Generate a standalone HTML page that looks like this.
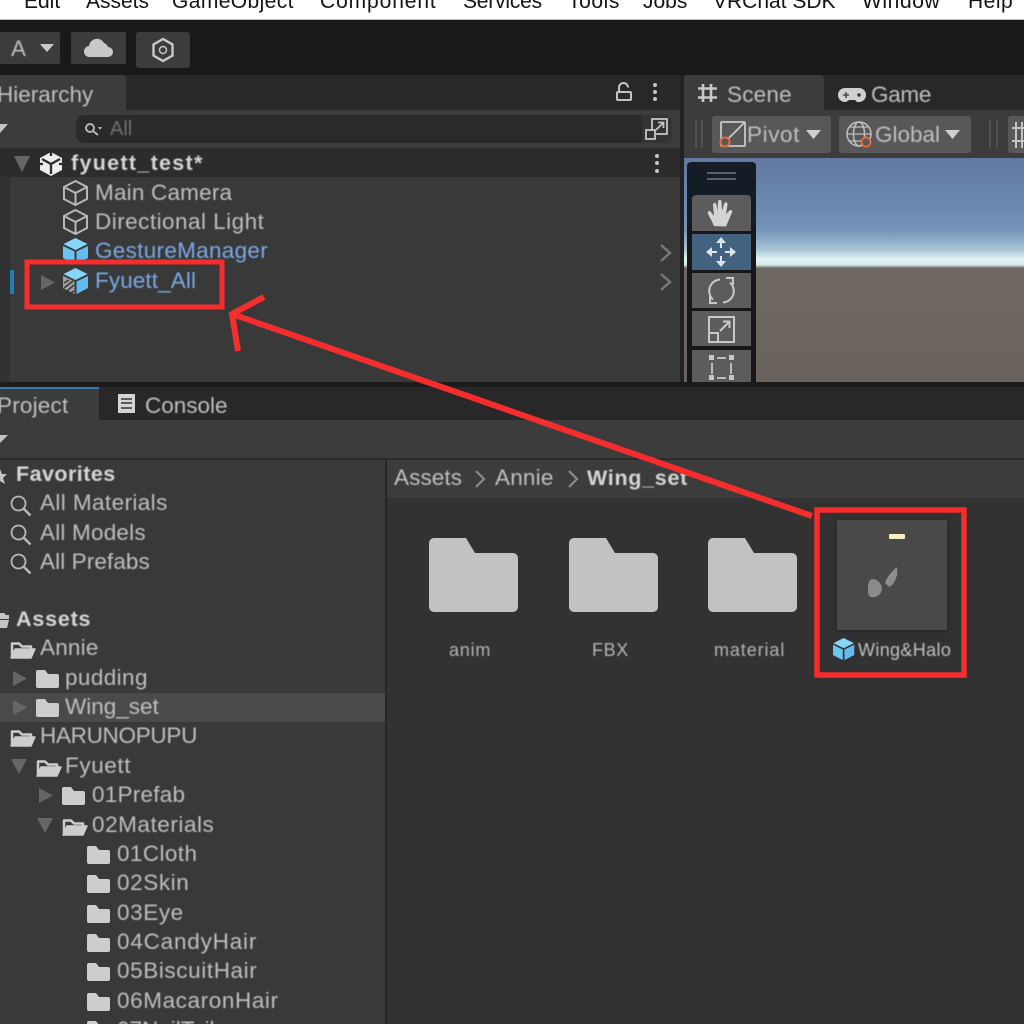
<!DOCTYPE html>
<html><head><meta charset="utf-8">
<style>
html,body{margin:0;padding:0;background:#2f2f2f}
#p{position:relative;width:1024px;height:1024px;overflow:hidden;background:#393939;font-family:"Liberation Sans",sans-serif}
.b{position:absolute}
.t{position:absolute;white-space:nowrap;font-size:22.5px;line-height:28px;color:#bfbfbf;filter:blur(.5px)}
.h{color:#d6d6d6;font-weight:bold;font-size:21.5px}
.l{color:#7aa9e6}
.m{color:#141414;font-size:21px;line-height:24px;top:-10px;filter:blur(.3px)}
.s{font-size:18px;line-height:20px;top:640px;color:#b4b4b4}
svg{position:absolute;left:0;top:0}
</style></head><body><div id="p">
<!-- menu -->
<div class="b" style="left:0;top:0;width:1024px;height:20px;background:#fff"></div>
<div class="b" style="left:0;top:19px;width:1024px;height:1px;background:#bbb"></div>
<div class="t m" style="left:24px">Edit</div>
<div class="t m" style="left:86px">Assets</div>
<div class="t m" style="left:172px;letter-spacing:.4px">GameObject</div>
<div class="t m" style="left:320px;letter-spacing:.9px">Component</div>
<div class="t m" style="left:463px;letter-spacing:-.2px">Services</div>
<div class="t m" style="left:568px;letter-spacing:.6px">Tools</div>
<div class="t m" style="left:643px">Jobs</div>
<div class="t m" style="left:713px">VRChat SDK</div>
<div class="t m" style="left:862px;letter-spacing:.6px">Window</div>
<div class="t m" style="left:968px;letter-spacing:.5px">Help</div>
<!-- toolbar -->
<div class="b" style="left:0;top:20px;width:1024px;height:55px;background:#191919"></div>
<div class="b" style="left:0;top:32px;width:60px;height:32px;background:#3c3c3c;border-radius:2px"></div>
<div class="t" style="left:11px;top:35px">A</div>
<div class="b" style="left:71px;top:32px;width:55px;height:32px;background:#3c3c3c;border-radius:2px"></div>
<div class="b" style="left:136px;top:32px;width:54px;height:36px;background:#3c3c3c;border-radius:3px"></div>
<!-- hierarchy panel -->
<div class="b" style="left:0;top:75px;width:680px;height:35px;background:#282828"></div>
<div class="b" style="left:0;top:75px;width:126px;height:36px;background:#3c3c3c;border-radius:0 4px 0 0"></div>
<div class="t" style="left:-3px;top:81px">Hierarchy</div>
<div class="b" style="left:0;top:111px;width:680px;height:37px;background:#3c3c3c"></div>
<div class="b" style="left:76px;top:115px;width:566px;height:28px;background:#2a2a2a;border-radius:8px 0 0 8px"></div>
<div class="b" style="left:642px;top:115px;width:30px;height:28px;background:#333;border-radius:0 8px 8px 0"></div>
<div class="t" style="left:110px;top:115px;color:#707070;font-size:20px">All</div>
<div class="b" style="left:0;top:148px;width:680px;height:29px;background:#2c2c2c"></div>
<div class="t h" style="left:71px;top:149px;letter-spacing:1.3px">fyuett_test*</div>
<div class="b" style="left:0;top:177px;width:10px;height:205px;background:#313131"></div>
<div class="t" style="left:95px;top:179px;letter-spacing:.2px">Main Camera</div>
<div class="t" style="left:95px;top:208px;letter-spacing:.47px">Directional Light</div>
<div class="t l" style="left:95px;top:237px;letter-spacing:.3px">GestureManager</div>
<div class="t l" style="left:95px;top:267px;letter-spacing:.1px">Fyuett_All</div>
<div class="b" style="left:10px;top:270px;width:4px;height:24px;background:#1c7fb8"></div>
<!-- scene panel -->
<div class="b" style="left:680px;top:75px;width:4px;height:307px;background:#222"></div>
<div class="b" style="left:684px;top:75px;width:340px;height:35px;background:#282828"></div>
<div class="b" style="left:684px;top:75px;width:140px;height:36px;background:#3c3c3c;border-radius:4px 4px 0 0"></div>
<div class="t" style="left:727px;top:81px;letter-spacing:.2px">Scene</div>
<div class="t" style="left:871px;top:81px;letter-spacing:-.3px">Game</div>
<div class="b" style="left:684px;top:110px;width:340px;height:48px;background:#3c3c3c"></div>
<div class="b" style="left:712px;top:116px;width:119px;height:37px;background:#585858;border-radius:3px"></div>
<div class="b" style="left:839px;top:116px;width:132px;height:37px;background:#585858;border-radius:3px"></div>
<div class="b" style="left:1008px;top:116px;width:16px;height:37px;background:#585858;border-radius:3px 0 0 3px"></div>
<div class="t" style="left:747px;top:121px;letter-spacing:.6px">Pivot</div>
<div class="t" style="left:875px;top:121px">Global</div>
<div class="b" style="left:684px;top:158px;width:340px;height:224px;background:linear-gradient(#62789f 0,#6a86ae 40px,#7493b8 72px,#a9c6d6 92px,#e2f4f4 101px,#d4e8e8 107px,#6f6862 110px,#6a625c 224px)"></div>
<div class="b" style="left:687px;top:162px;width:69px;height:220px;background:#141c26;border-radius:4px 4px 0 0"></div>
<div class="b" style="left:687px;top:225px;width:69px;height:157px;background:#171717"></div>
<div class="b" style="left:692px;top:195px;width:59px;height:36px;background:#5c5c5c;border-radius:4px 4px 0 0"></div>
<div class="b" style="left:692px;top:234px;width:59px;height:36px;background:#42627f"></div>
<div class="b" style="left:692px;top:273px;width:59px;height:35px;background:#5c5c5c"></div>
<div class="b" style="left:692px;top:311px;width:59px;height:35px;background:#5c5c5c"></div>
<div class="b" style="left:692px;top:350px;width:59px;height:32px;background:#5c5c5c"></div>
<!-- divider -->
<div class="b" style="left:0;top:382px;width:1024px;height:5px;background:#1c1c1c"></div>
<!-- project panel -->
<div class="b" style="left:0;top:387px;width:1024px;height:33px;background:#282828"></div>
<div class="b" style="left:0;top:387px;width:99px;height:34px;background:#3c3c3c;border-top:2px solid #3a76aa;box-sizing:border-box"></div>
<div class="t" style="left:-3px;top:392px;letter-spacing:.2px">Project</div>
<div class="t" style="left:145px;top:392px">Console</div>
<div class="b" style="left:0;top:420px;width:1024px;height:38px;background:#3c3c3c"></div>
<div class="b" style="left:0;top:458px;width:1024px;height:2px;background:#2a2a2a"></div>
<div class="b" style="left:0;top:460px;width:385px;height:564px;background:#393939"></div>
<div class="b" style="left:385px;top:460px;width:2px;height:564px;background:#262626"></div>
<div class="b" style="left:387px;top:460px;width:637px;height:38px;background:#3c3c3c"></div>
<div class="b" style="left:387px;top:498px;width:637px;height:526px;background:#323232"></div>
<div class="b" style="left:0;top:693px;width:385px;height:29px;background:#4a4a4a"></div>
<div class="t h" style="left:16px;top:460px;letter-spacing:.45px">Favorites</div>
<div class="t" style="left:40px;top:489px;letter-spacing:.4px">All Materials</div>
<div class="t" style="left:40px;top:519px;letter-spacing:.2px">All Models</div>
<div class="t" style="left:40px;top:548px;letter-spacing:.1px">All Prefabs</div>
<div class="t h" style="left:16px;top:605px;letter-spacing:.8px">Assets</div>
<div class="t" style="left:40px;top:634px;letter-spacing:.2px">Annie</div>
<div class="t" style="left:65px;top:664px;letter-spacing:.4px">pudding</div>
<div class="t" style="left:65px;top:693px">Wing_set</div>
<div class="t" style="left:40px;top:722px;letter-spacing:-.3px">HARUNOPUPU</div>
<div class="t" style="left:65px;top:752px;letter-spacing:.6px">Fyuett</div>
<div class="t" style="left:92px;top:781px;letter-spacing:.25px">01Prefab</div>
<div class="t" style="left:92px;top:811px;letter-spacing:.55px">02Materials</div>
<div class="t" style="left:117px;top:840px;letter-spacing:.4px">01Cloth</div>
<div class="t" style="left:117px;top:869px;letter-spacing:.6px">02Skin</div>
<div class="t" style="left:117px;top:899px;letter-spacing:.6px">03Eye</div>
<div class="t" style="left:117px;top:928px;letter-spacing:.8px">04CandyHair</div>
<div class="t" style="left:117px;top:957px;letter-spacing:.6px">05BiscuitHair</div>
<div class="t" style="left:117px;top:987px;letter-spacing:.6px">06MacaronHair</div>
<div class="t" style="left:117px;top:1016px">07NailTail</div>
<div class="t" style="left:394px;top:464px;letter-spacing:.1px">Assets</div>
<div class="t" style="left:495px;top:464px;letter-spacing:.2px">Annie</div>
<div class="t h" style="left:587px;top:464px;letter-spacing:.7px">Wing_set</div>
<div class="t s" style="left:449px;letter-spacing:.8px">anim</div>
<div class="t s" style="left:592px;letter-spacing:.6px">FBX</div>
<div class="t s" style="left:714px;letter-spacing:.9px">material</div>
<div class="t s" style="left:858px;letter-spacing:.35px;color:#c0c0c0">Wing&amp;Halo</div>
<div class="b" style="left:837px;top:520px;width:110px;height:110px;background:#494949;box-shadow:0 1px 4px #222"></div>

<svg width="1024" height="1024" viewBox="0 0 1024 1024" fill="none">
<defs>
<g id="fc"><path d="M0 2a2 2 0 0 1 2-2h7l3 4h9a2 2 0 0 1 2 2v10a2 2 0 0 1-2 2H2a2 2 0 0 1-2-2z" fill="#cdcdcd"/></g>
<g id="fo"><path d="M2 16V2.500h7l3 3h9V8" stroke="#cdcdcd" stroke-width="2.500" stroke-linejoin="round"/><path d="M1 17l4-9h20l-4 9z" fill="#cdcdcd" stroke="#cdcdcd" stroke-width="1.500" stroke-linejoin="round"/></g>
<g id="bf"><path d="M0 5a5 5 0 0 1 5-5h32l9 15h38a5 5 0 0 1 5 5v49a5 5 0 0 1-5 5H5a5 5 0 0 1-5-5z" fill="#c2c2c2"/></g>
<g id="cube"><path d="M12.500 1l11.500 6v12l-11.500 6L1 19V7z M1 7l11.500 6L24 7 M12.500 13v12" stroke="#b8b8b8" stroke-width="2"/></g>
<g id="bcube"><path d="M12.500 0l12 6-12 6-12-6z" fill="#86d6fc"/><path d="M0 8l11.500 5.500V26L0 20z" fill="#6cc4f0"/><path d="M25 8l-11.500 5.500V26L25 20z" fill="#62bdee"/></g>
<g id="mag"><circle cx="8.500" cy="8.500" r="7" stroke="#b8b8b8" stroke-width="1.800"/><path d="M13.500 13.500l7 7" stroke="#b8b8b8" stroke-width="2.500"/></g>
</defs>
<!-- toolbar icons -->
<path d="M40 44h14l-7 8z" fill="#c8c8c8"/>
<path d="M90 57a5.500 5.500 0 0 1-1-11 8 8 0 0 1 15-3 6 6 0 0 1 4 4 5 5 0 0 1 0 10z" fill="#c8c8c8"/>
<path d="M163 39l9.500 5.500v11L163 61l-9.500-5.500v-11z" stroke="#c8c8c8" stroke-width="2.400"/><circle cx="163" cy="50" r="3.500" stroke="#c8c8c8" stroke-width="1.500"/>
<!-- hierarchy icons -->
<path d="M619 91v-3.500a4.500 4.500 0 0 1 9 0" stroke="#c4c4c4" stroke-width="2"/><rect x="617" y="92" width="14" height="8" rx="1" stroke="#c4c4c4" stroke-width="2"/>
<g fill="#c4c4c4"><circle cx="655" cy="85" r="2"/><circle cx="655" cy="92" r="2"/><circle cx="655" cy="99" r="2"/><circle cx="657" cy="156" r="2"/><circle cx="657" cy="163" r="2"/><circle cx="657" cy="171" r="2"/></g>
<path d="M0 124h8l-8 9z" fill="#c4c4c4"/>
<circle cx="90" cy="128" r="4" stroke="#b4b4b4" stroke-width="2"/><path d="M93 131l5 4" stroke="#b4b4b4" stroke-width="2"/><path d="M98 127h4l-2 3z" fill="#b4b4b4"/>
<rect x="652" y="119" width="15" height="15" stroke="#c4c4c4" stroke-width="1.800"/><rect x="646" y="130" width="9" height="9" fill="#333" stroke="#c4c4c4" stroke-width="1.800"/><path d="M656 130l7-7M658 122.500h5.500v5.500" stroke="#c4c4c4" stroke-width="1.800"/>
<path d="M14 156h16l-8 16z" fill="#666"/>
<path d="M51 152l11 6v12l-11 6-11-6v-12z" fill="#eee"/><path d="M42 159l9 5 9-5M51 164v10M51 152v4M40 164h3M59 164h3" stroke="#2c2c2c" stroke-width="2.300"/>
<use href="#cube" x="63" y="180"/><use href="#cube" x="63" y="209"/>
<use href="#bcube" x="63" y="238"/><use href="#bcube" x="63" y="268"/>
<path d="M63 276l11.500 5.500V294L63 288z" fill="#a0a0a0"/><path d="M64 283l5-3M64 288l9-7M67 291l7-6M71 293l3-2" stroke="#383838" stroke-width="1.500"/>
<path d="M41 275l14 7.500-14 7.500z" fill="#666"/>
<path d="M661 245l9 8-9 8M661 274l9 8-9 8" stroke="#777" stroke-width="2.500"/>
<!-- scene tab icons -->
<path d="M703 84v18M711 84v18M698 88.500h19M698 97.500h19" stroke="#c8c8c8" stroke-width="2.600"/>
<path d="M845 88h14a7 7 0 0 1 0 14h-2l-2-2h-6l-3 2h-1a7 7 0 0 1 0-14z" fill="#d0d0d0"/><path d="M843 95h6M846 92v6" stroke="#333" stroke-width="1.300"/><circle cx="859" cy="95" r="1.700" fill="#333"/>
<path d="M696 120v28M702 120v28M990 120v28M997 120v28" stroke="#585858" stroke-width="1.500"/>
<rect x="721" y="122" width="24" height="24" rx="1" stroke="#c8c8c8" stroke-width="1.800"/><path d="M728 139l16-16" stroke="#c8c8c8" stroke-width="1.800"/><circle cx="725" cy="142" r="4.500" fill="#585858" stroke="#e8693a" stroke-width="2"/>
<path d="M806 130h15l-7.500 9zM945 130h15l-7.500 9z" fill="#cfcfcf"/>
<circle cx="859" cy="134" r="12" stroke="#c0c0c0" stroke-width="1.500"/><ellipse cx="859" cy="134" rx="5.500" ry="12" stroke="#c0c0c0" stroke-width="1.500"/><path d="M847 134h24M849 127h20M849 141h20" stroke="#c0c0c0" stroke-width="1.300"/><circle cx="866" cy="142" r="4.500" fill="#585858" stroke="#e8693a" stroke-width="2"/>
<path d="M1016 122v26M1022 122v26M1012 128h12M1012 141h12" stroke="#c4c4c4" stroke-width="2"/>
<!-- tools -->
<path d="M707 173h29M707 179h29" stroke="#6e7680" stroke-width="1.500"/>
<path d="M714 226c-2-5-4-8-6-12-1-3 2-4 3-2l3 4-1-11c0-3 3-3 3.500 0l1 6 .5-9c0-3 3.500-3 3.500 0l.5 9 2-7c1-3 4-2 3.500 1l-1.500 9 3-3c2-2 4-.5 3 1.500l-6 14z" fill="#d4d4d4"/>
<path d="M721 243v5M721 256v5M712 252h5M725 252h5" stroke="#dce4ec" stroke-width="2"/>
<path d="M721 237l-5 6h10zM721 267l-5-6h10zM706 252l6-5v10zM736 252l-6-5v10z" fill="#dce4ec"/>
<path d="M720 279.500a11.500 11.500 0 0 0-7 20" stroke="#c8c8c8" stroke-width="2"/><path d="M710 296v7h7" stroke="#c8c8c8" stroke-width="2"/>
<path d="M723 302.500a11.500 11.500 0 0 0 7-20" stroke="#c8c8c8" stroke-width="2"/><path d="M733 285v-7h-7" stroke="#c8c8c8" stroke-width="2"/>
<rect x="709" y="317" width="25" height="25" stroke="#c8c8c8" stroke-width="2"/><rect x="709" y="333" width="9" height="9" stroke="#c8c8c8" stroke-width="2"/><path d="M720 331l9-9M723 321.500h6.500v6.500" stroke="#c8c8c8" stroke-width="2"/>
<path d="M717 358h9M717 378h9M712 363v11M731 363v11" stroke="#c8c8c8" stroke-width="1.800"/>
<path fill="#c8c8c8" d="M709 355h5v5h-5zM729 355h5v5h-5zM709 375h5v5h-5zM729 375h5v5h-5z"/>
<!-- project -->
<path d="M118 394h17v19h-17z" fill="#d4d4d4"/><path d="M121 399h11M121 403h11M121 408h11" stroke="#333" stroke-width="1.500"/>
<path d="M0 435h8l-8 8z" fill="#c4c4c4"/>
<path d="M0 469l2 5h5l-4 4 2 6-5-3z" fill="#c4c4c4"/>
<use href="#mag" x="10" y="495"/><use href="#mag" x="10" y="524"/><use href="#mag" x="10" y="553"/>
<path d="M-2 613h6l2 2h3v4h-11zM-2 620h11l-2 8h-9z" fill="#c4c4c4"/>
<use href="#fo" x="10" y="641"/><use href="#fo" x="10" y="729"/><use href="#fo" x="36" y="759"/><use href="#fo" x="62" y="818"/>
<use href="#fc" x="36" y="670"/><use href="#fc" x="36" y="699"/><use href="#fc" x="62" y="787"/>
<use href="#fc" x="87" y="846"/><use href="#fc" x="87" y="875"/><use href="#fc" x="87" y="905"/><use href="#fc" x="87" y="934"/><use href="#fc" x="87" y="963"/><use href="#fc" x="87" y="993"/><use href="#fc" x="87" y="1021"/>
<path d="M13 671l14 7.500-14 7.500zM13 700l14 7.500-14 7.500zM39 788l14 7.500-14 7.500z" fill="#666"/>
<path d="M11 759h16l-8 15zM37 818h16l-8 15z" fill="#666"/>
<path d="M476 471l8 8-8 8M569 471l8 8-8 8" stroke="#8a8a8a" stroke-width="2.200"/>
<use href="#bf" x="429" y="538"/><use href="#bf" x="569" y="538"/><use href="#bf" x="708" y="538"/>
<rect x="889" y="534" width="16" height="5" rx="1" fill="#f4efc4"/>
<path d="M870 580c5-3 11 2 12 8 0 5-3 8-7 9-5 1-7-1-7-6 0-5 0-9 2-11z" fill="#8a8a8a"/>
<path d="M897 567c1 7-1 14-5 18l-3 2-4-4c2-6 7-12 12-16z" fill="#8e8e8e"/>
<g transform="translate(833,638) scale(.85)"><use href="#bcube"/></g>
<!-- annotations -->
<rect x="27" y="262" width="195" height="45" stroke="#f52d2d" stroke-width="5"/>
<rect x="817" y="510" width="147" height="165" stroke="#f52d2d" stroke-width="5.500"/>
<path d="M812 516L232 314M264 297L232 314L238 351" stroke="#f52d2d" stroke-width="6"/>
</svg>
</div></body></html>
